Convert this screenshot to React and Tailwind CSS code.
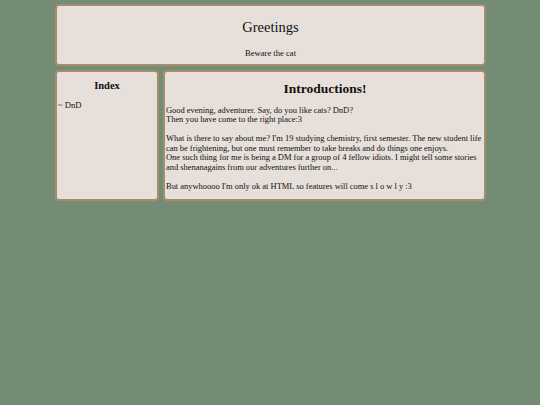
import React from "react";

const box = "bg-[#e7e0da] border-2 border-[#a58d6c] rounded-[4px]";

const lines = [
  ["Good evening, adventurer. Say, do you like cats? DnD?", "Then you have come to the right place:3"],
  [
    "What is there to say about me? I'm 19 studying chemistry, first semester. The new student life",
    "can be frightening, but one must remember to take breaks and do things one enjoys.",
    "One such thing for me is being a DM for a group of 4 fellow idiots. I might tell some stories",
    "and shenanagains from our adventures further on...",
  ],
  ["But anywhoooo I'm only ok at HTML so features will come s l o w l y :3"],
];

export default function App() {
  return (
    <div className="min-h-[405px] bg-[#748b74] text-[#111] font-['Liberation_Serif',serif] pt-[4px]">
      <div className="w-[431px] ml-[55px] flex flex-col gap-[4px]">
        <div className={`${box} h-[62px] flex flex-col items-center`}>
          <h1 className="text-[14.5px] leading-none mt-[14px]">Greetings</h1>
          <p className="text-[8.6px] leading-none mt-[14px]">Beware the cat</p>
        </div>
        <div className="flex gap-[4px]">
          <div className={`${box} w-[104px] h-[131px] px-[1px]`}>
            <h2 className="text-[10.5px] font-bold text-center leading-none mt-[9px]">Index</h2>
            <p className="text-[8.6px] leading-none mt-[9px]">~ DnD</p>
          </div>
          <div className={`${box} flex-1 h-[131px] pl-[1px] pr-0`}>
            <h2 className="text-[13.5px] font-bold text-center leading-none mt-[10px]">Introductions!</h2>
            <div className="text-[8.5px] tracking-[-0.03px] leading-[9.5px] mt-[10px] flex flex-col gap-[9.5px]">
              {lines.map((para, i) => (
                <div key={i}>
                  {para.map((l) => (
                    <p key={l} className="whitespace-nowrap">{l}</p>
                  ))}
                </div>
              ))}
            </div>
          </div>
        </div>
      </div>
    </div>
  );
}
